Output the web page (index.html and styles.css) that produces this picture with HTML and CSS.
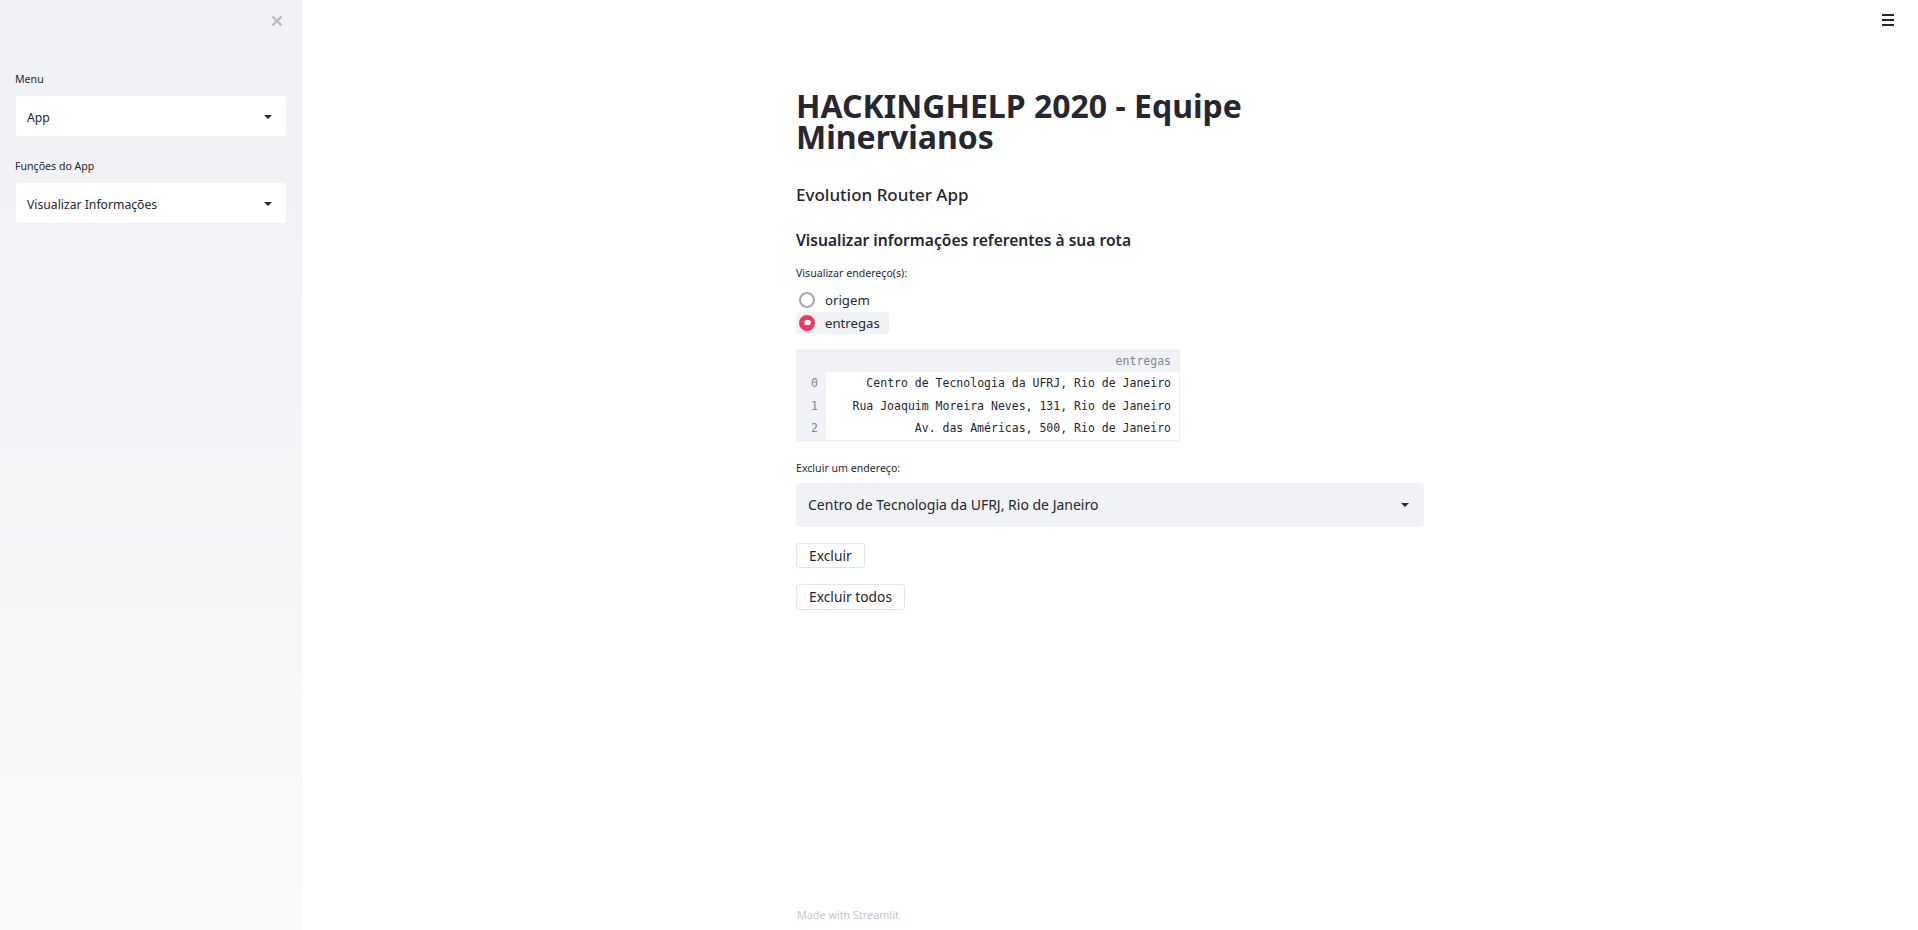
FILE: index.html
```html
<!DOCTYPE html>
<html lang="pt">
<head>
<meta charset="utf-8">
<title>HACKINGHELP 2020 - Equipe Minervianos</title>
<link rel="stylesheet" href="styles.css">
</head>
<body>
<aside class="sidebar">
  <div class="sidebar-top">
    <svg class="close-icon" width="12" height="12" viewBox="0 0 12 12"><path d="M1.5 1.5 L10.5 10.5 M10.5 1.5 L1.5 10.5" stroke="#b7b9c0" stroke-width="2.4" stroke-linecap="butt"/></svg>
  </div>
  <div class="sb-widget first">
    <div class="sb-label">Menu</div>
    <div class="sb-select"><span class="sb-value">App</span><span class="caret"></span></div>
  </div>
  <div class="sb-widget">
    <div class="sb-label">Funções do App</div>
    <div class="sb-select"><span class="sb-value">Visualizar Informações</span><span class="caret"></span></div>
  </div>
</aside>
<main class="main">
  <div class="hamburger"><span></span><span></span><span></span></div>
  <div class="col">
    <h1 class="title">HACKINGHELP 2020 - Equipe Minervianos</h1>
    <h2 class="subtitle">Evolution Router App</h2>
    <h3 class="section">Visualizar informações referentes à sua rota</h3>
    <div class="label">Visualizar endereço(s):</div>
    <div class="radios">
      <div class="radio"><span class="dot"></span><span>origem</span></div>
      <div class="radio checked"><span class="dot"></span><span>entregas</span></div>
    </div>
    <table class="df">
      <thead><tr><th class="idx"></th><th>entregas</th></tr></thead>
      <tbody>
        <tr><td class="idx">0</td><td>Centro de Tecnologia da UFRJ, Rio de Janeiro</td></tr>
        <tr><td class="idx">1</td><td>Rua Joaquim Moreira Neves, 131, Rio de Janeiro</td></tr>
        <tr><td class="idx">2</td><td>Av. das Américas, 500, Rio de Janeiro</td></tr>
      </tbody>
    </table>
    <div class="label label2">Excluir um endereço:</div>
    <div class="select"><span>Centro de Tecnologia da UFRJ, Rio de Janeiro</span><span class="caret"></span></div>
    <button class="btn btn1">Excluir</button>
    <button class="btn btn2">Excluir todos</button>
    <div class="footer">Made with Streamlit</div>
  </div>
</main>
</body>
</html>
```
FILE: styles.css
```css
html, body {
  margin: 0;
  padding: 0;
  height: 100%;
}
body {
  display: flex;
  font-family: "Noto Sans", "Open Sans", sans-serif;
  color: #262730;
  background: #ffffff;
  overflow: hidden;
}
.sidebar {
  width: 302px;
  flex: 0 0 302px;
  height: 100vh;
  box-sizing: border-box;
  padding: 0 16px;
  background: linear-gradient(180deg, #f0f2f6 0%, #f0f2f6 20%, #fafafa 100%);
}
.sidebar-top {
  display: flex;
  justify-content: flex-end;
  padding: 15px 3px 0 0;
  height: 27px;
  box-sizing: border-box;
}
.close-icon {
  display: block;
}
.sb-widget.first {
  margin-top: 44px;
}
.sb-widget {
  margin-top: 22px;
}
.sb-label {
  font-size: 10.6px;
  line-height: 16px;
  height: 16px;
  margin-bottom: 9px;
  margin-left: -1px;
}
.sb-select {
  height: 40px;
  background: #ffffff;
  border-radius: 3px;
  display: flex;
  align-items: center;
  justify-content: space-between;
  padding: 1px 14px 0 11px;
  box-sizing: border-box;
  font-size: 12.2px;
}
.sb-value {
  padding-top: 1px;
}
.caret {
  width: 0;
  height: 0;
  border-left: 4px solid transparent;
  border-right: 4px solid transparent;
  border-top: 4px solid #262730;
}
.main {
  flex: 1;
  height: 100vh;
  display: flex;
  justify-content: center;
  position: relative;
}
.hamburger {
  position: absolute;
  top: 14px;
  right: 24px;
  width: 12px;
  display: flex;
  flex-direction: column;
  gap: 3.5px;
}
.hamburger span {
  display: block;
  height: 1.5px;
  background: #262730;
}
.col {
  width: 628px;
  height: 100vh;
  box-sizing: border-box;
  padding: 90px 0 7px;
  display: flex;
  flex-direction: column;
  align-items: flex-start;
}
.title {
  margin: 0;
  font-size: 32px;
  line-height: 31px;
  font-weight: 700;
  width: 500px;
}
.subtitle {
  margin: 31px 0 0;
  font-size: 17px;
  line-height: 24px;
  font-weight: 500;
}
.section {
  margin: 22px 0 0;
  font-size: 15.6px;
  line-height: 22px;
  font-weight: 600;
}
.label {
  margin-top: 14px;
  font-size: 10.6px;
  line-height: 16px;
}
.radios {
  margin-top: 8px;
  display: flex;
  flex-direction: column;
  align-items: flex-start;
}
.radio {
  display: flex;
  align-items: center;
  gap: 10px;
  height: 22.5px;
  padding: 0 9px 0 3px;
  font-size: 13.2px;
  border-radius: 3px;
}
.radio .dot {
  width: 16px;
  height: 16px;
  box-sizing: border-box;
  border: 2px solid #a3a8b8;
  border-radius: 50%;
  display: flex;
  align-items: center;
  justify-content: center;
}
.radio.checked {
  background: #f0f2f6;
}
.radio.checked .dot {
  background: #f63366;
  border-color: #f63366;
}
.radio.checked .dot::after {
  content: "";
  width: 7px;
  height: 5px;
  border-radius: 2.5px;
  background: #ffffff;
}
.df {
  margin-top: 15px;
  border-collapse: collapse;
  font-family: "DejaVu Sans Mono", "Liberation Mono", monospace;
  font-size: 11.5px;
  width: 384px;
  border-right: 1px solid #eceef3;
  border-bottom: 1px solid #eceef3;
}
.df th, .df td {
  padding: 0 8px 0 0;
  text-align: right;
  white-space: nowrap;
  font-weight: 400;
}
.df thead th {
  height: 23px;
  background: #f0f2f6;
  color: #808495;
}
.df td {
  height: 22.5px;
  background: #ffffff;
}
.df .idx {
  width: 22px;
  background: #f0f2f6;
  color: #808495;
}
.label2 {
  margin-top: 19px;
}
.select {
  margin-top: 7px;
  width: 100%;
  height: 44px;
  box-sizing: border-box;
  background: #f0f2f6;
  border-radius: 4px;
  display: flex;
  align-items: center;
  justify-content: space-between;
  padding: 0 15px 0 12px;
  font-size: 14px;
}
.btn {
  font-family: "Noto Sans", "Open Sans", sans-serif;
  font-size: 13.8px;
  line-height: 23px;
  color: #262730;
  background: #ffffff;
  border: 1px solid #e3e5ea;
  border-radius: 3px;
  padding: 0 12px;
  margin: 0;
}
.btn1 {
  margin-top: 16px;
}
.btn2 {
  margin-top: 16px;
  line-height: 24px;
}
.footer {
  margin-top: auto;
  font-size: 10.8px;
  line-height: 16px;
  color: #c3c6d2;
  padding-left: 1px;
}
```
